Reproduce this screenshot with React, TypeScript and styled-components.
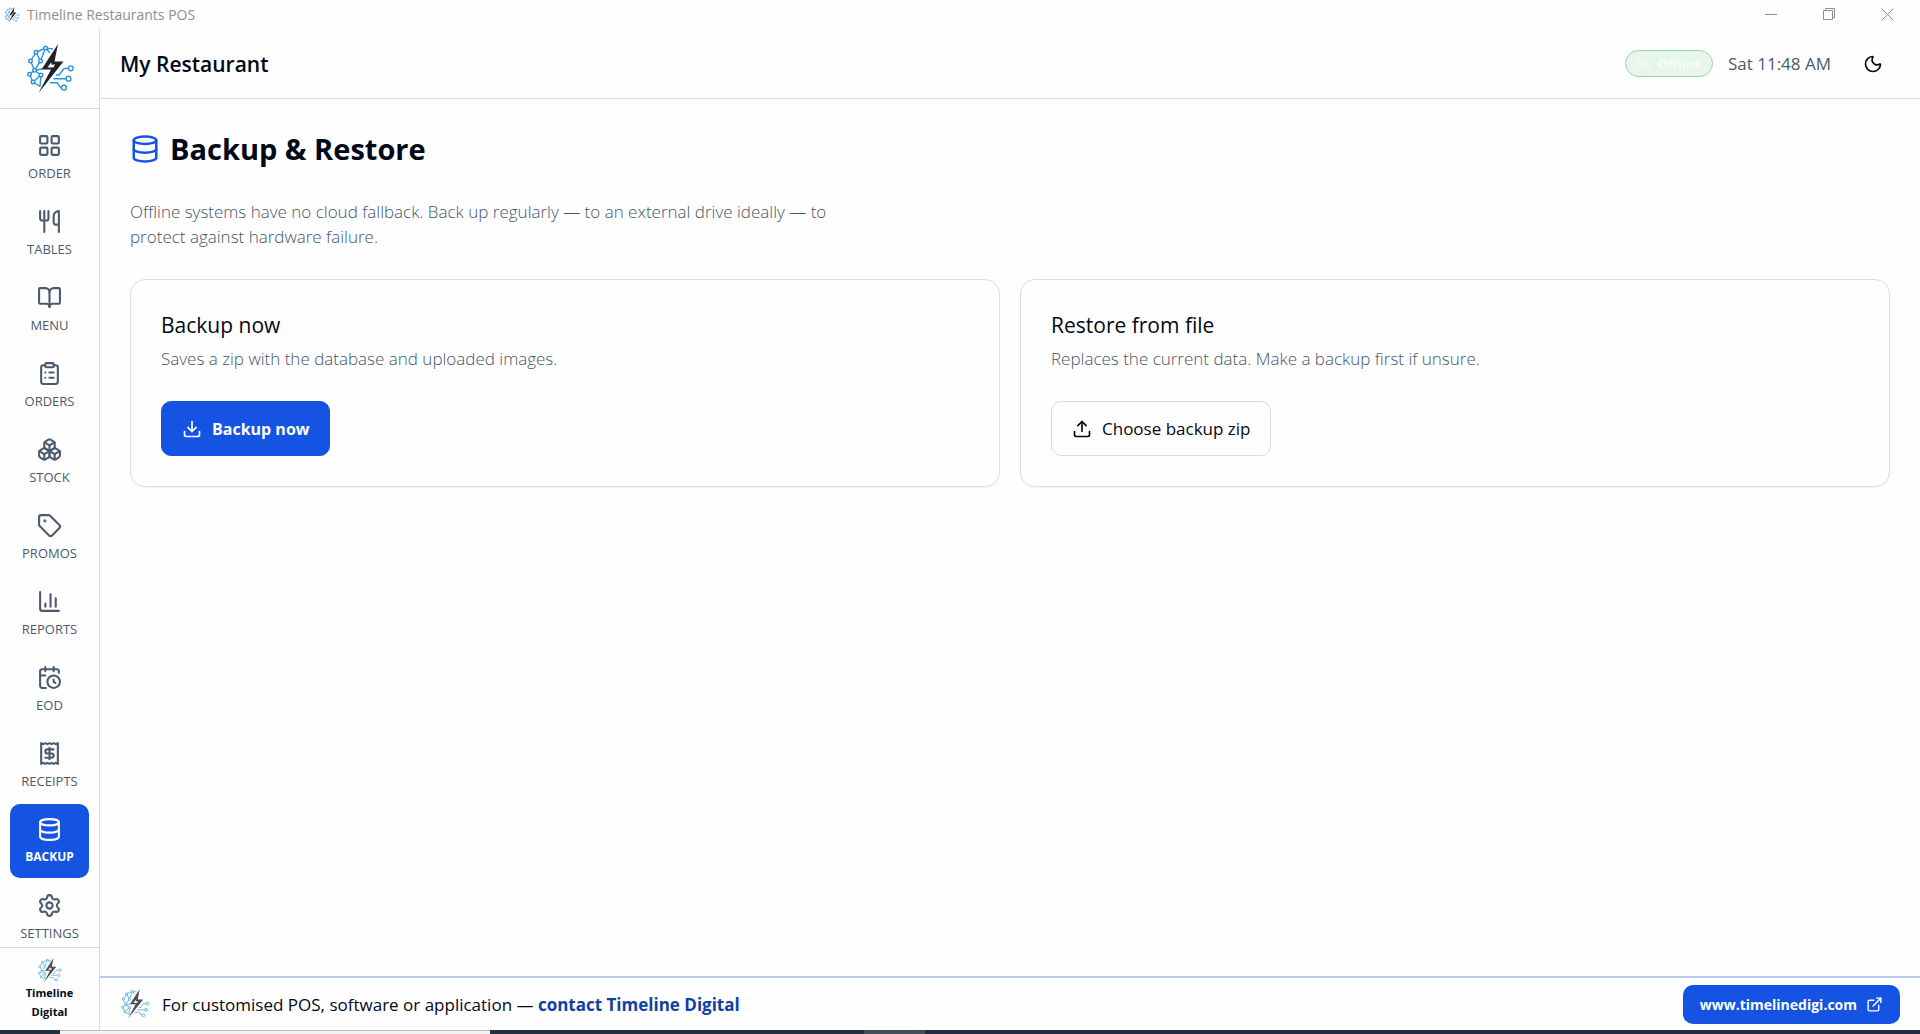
import React from "react";
import styled, { createGlobalStyle, css } from "styled-components";
import {
  LayoutGrid, Utensils, BookOpen, ClipboardList, Boxes, Tag, BarChart3, CalendarClock,
  Receipt, Database, Settings, Download, Upload, WifiOff, Moon, ExternalLink,
} from "lucide-react";

const Global = createGlobalStyle`
  *, *::before, *::after { box-sizing: border-box; }
  body { margin: 0; background: #fefefe; color: #020817; font-family: "Open Sans", "Noto Sans", sans-serif; font-size: 17px; }
  h1, h2, p { margin: 0; }
  a { color: inherit; text-decoration: none; }
  button { font: inherit; color: inherit; border: 0; background: none; padding: 0; cursor: pointer; }
`;

const Window = styled.div`
  display: flex;
  flex-direction: column;
  height: 100vh;
  overflow: hidden;
`;
const TitleBar = styled.div`
  flex: none;
  display: flex;
  align-items: center;
  justify-content: space-between;
  height: 29px;
  padding: 0 4px;
  color: #8f8f8f;
  font-size: 14px;
`;
const TitleName = styled.div`
  display: flex;
  align-items: center;
  gap: 7px;
`;
const WindowControls = styled.div`
  display: flex;
`;
const WindowButton = styled.button`
  display: grid;
  place-items: center;
  width: 58px;
  height: 28px;
`;
const Body = styled.div`
  flex: 1;
  display: flex;
  min-height: 0;
`;
const Sidebar = styled.aside`
  flex: none;
  display: flex;
  flex-direction: column;
  width: 100px;
  border-right: 1px solid #d6dde9;
`;
const Brand = styled.div`
  flex: none;
  display: grid;
  place-items: center;
  height: 80px;
  border-bottom: 1px solid #d6dde9;
`;
const Nav = styled.nav`
  flex: 1;
  display: flex;
  flex-direction: column;
  gap: 2px;
  min-height: 0;
  padding: 11px 10px 0;
  overflow: hidden;
`;
const NavItem = styled.a<{ $active?: boolean }>`
  flex: none;
  display: flex;
  flex-direction: column;
  align-items: center;
  justify-content: center;
  gap: 6px;
  height: 74px;
  border-radius: 10px;
  color: #4c5a6e;
  font-size: 13px;
  line-height: 18px;
  font-weight: 500;
  ${(p) => p.$active && css`
    background: #1553e2;
    color: #fff;
    font-size: 12px;
    font-weight: 700;
  `}
`;
const SidebarFooter = styled.a`
  flex: none;
  display: flex;
  flex-direction: column;
  align-items: center;
  height: 83px;
  padding-top: 10px;
  border-top: 1px solid #d6dde9;
  font-size: 11px;
  line-height: 19px;
  font-weight: 700;
  text-align: center;
`;
const FooterName = styled.span`
  width: 60px;
`;
const Main = styled.div`
  flex: 1;
  display: flex;
  flex-direction: column;
  min-width: 0;
`;
const Header = styled.header`
  flex: none;
  display: flex;
  align-items: center;
  justify-content: space-between;
  height: 70px;
  padding: 0 20px;
  border-bottom: 1px solid #d6dde9;
`;
const Restaurant = styled.div`
  font-size: 21px;
  font-weight: 600;
`;
const Status = styled.div`
  display: flex;
  align-items: center;
  gap: 15px;
`;
const OfflineBadge = styled.span`
  display: flex;
  align-items: center;
  gap: 6px;
  height: 27px;
  padding: 0 10px;
  border: 1px solid #9bd3ae;
  border-radius: 14px;
  background: #e7f6ec;
  color: #f8fafc;
  font-size: 13px;
  font-weight: 700;
`;
const Clock = styled.time`
  color: #4c5a6e;
  font-size: 17px;
`;
const ThemeButton = styled.button`
  display: grid;
  place-items: center;
  width: 54px;
  height: 40px;
`;
const Content = styled.main`
  flex: 1;
  min-height: 0;
  padding: 30px;
`;
const PageTitle = styled.h1`
  display: flex;
  align-items: center;
  gap: 10px;
  font-size: 29px;
  line-height: 40px;
  font-weight: 700;
  svg { color: #1553e2; }
`;
const Intro = styled.p`
  max-width: 720px;
  margin: 30px 0;
  color: #47556a;
  font-size: 17px;
  line-height: 25px;
  font-weight: 300;
`;
const Cards = styled.div`
  display: grid;
  grid-template-columns: 1fr 1fr;
  gap: 20px;
`;
const Card = styled.section`
  padding: 30px;
  border: 1px solid #d6dfeb;
  border-radius: 15px;
  box-shadow: 0 1px 2px rgba(0, 0, 0, 0.05);
`;
const CardTitle = styled.h2`
  font-size: 21px;
  line-height: 30px;
  font-weight: 500;
`;
const CardText = styled.p`
  margin: 6px 0 30px;
  color: #47556a;
  font-size: 17px;
  line-height: 25px;
  font-weight: 300;
`;
const ActionButton = styled.button<{ $primary?: boolean }>`
  display: inline-flex;
  align-items: center;
  gap: 10px;
  height: 55px;
  padding: 0 20px;
  border: 1px solid ${(p) => (p.$primary ? "#1553e2" : "#d3dce9")};
  border-radius: 10px;
  background: ${(p) => (p.$primary ? "#1553e2" : "#fefefe")};
  color: ${(p) => (p.$primary ? "#fff" : "#020817")};
  font-size: ${(p) => (p.$primary ? 16 : 17)}px;
  font-weight: ${(p) => (p.$primary ? 700 : 500)};
`;
const PromoBar = styled.footer`
  flex: none;
  display: flex;
  align-items: center;
  justify-content: space-between;
  height: 54px;
  padding: 0 20px;
  border-top: 2px solid #b9cbf6;
`;
const PromoText = styled.p`
  display: flex;
  align-items: center;
  gap: 12px;
  font-size: 17px;
  font-weight: 500;
  a { color: #0f419f; font-weight: 700; }
`;
const SiteLink = styled.a`
  display: flex;
  align-items: center;
  gap: 9px;
  height: 39px;
  padding: 0 17px;
  border-radius: 10px;
  background: #1553e2;
  color: #fff;
  font-size: 14px;
  font-weight: 700;
`;
const Taskbar = styled.div`
  flex: none;
  display: flex;
  height: 4px;
  background: #1e2c41;
`;
const TaskbarSegment = styled.div<{ $share: number; $tone: string; $edge?: boolean }>`
  flex: ${(p) => p.$share};
  background: ${(p) => p.$tone};
  border-top: ${(p) => (p.$edge ? "1px solid #b9bcbc" : "0")};
`;

const nodes = [
  [20.5, 4], [11, 8.3], [5.5, 17], [15.5, 17], [9.5, 26.3], [4.5, 30.3], [16, 31], [8, 38],
  [45.8, 24.3], [43.5, 34.7], [39, 43.7],
];

const Logo = ({ size, opacity = 1 }: { size: number; opacity?: number }) => (
  <svg width={size} height={size} viewBox="0 0 50 50" fill="none" opacity={opacity} aria-hidden="true">
    <g stroke="#2f93da" strokeWidth="1.4" strokeLinejoin="round">
      <path d="M28 5 20.5 4 11 8.300 5.500 17 9.500 26.300 4.500 30.300 8 38 15 42.500M20.500 4 15.500 17 11 8.300M20.500 4 25 9M15.500 17 9.500 26.300 16 31 8 38M9.500 26.300 17 25M16 31 15 42.500" />
      <path d="M31 31h3l5-6.500h5M28.500 34.700h13M25 38.700h7l3.500 5h2" />
      {nodes.map(([x, y]) => (
        <circle key={`${x}-${y}`} cx={x} cy={y} r={x > 30 ? 2.4 : 1.8} fill="#fefefe" />
      ))}
    </g>
    <path d="M33 0 16.500 25.500H26L13.500 49 38.500 17.500H29.500Z" fill="#222126" />
    <path d="M22.500 23.500l3.500-5 1 2.500 3-1-1.500 3.500z" fill="#fefefe" />
  </svg>
);

const items = [
  { label: "ORDER", Icon: LayoutGrid },
  { label: "TABLES", Icon: Utensils },
  { label: "MENU", Icon: BookOpen },
  { label: "ORDERS", Icon: ClipboardList },
  { label: "STOCK", Icon: Boxes },
  { label: "PROMOS", Icon: Tag },
  { label: "REPORTS", Icon: BarChart3 },
  { label: "EOD", Icon: CalendarClock },
  { label: "RECEIPTS", Icon: Receipt },
  { label: "BACKUP", Icon: Database },
  { label: "SETTINGS", Icon: Settings },
];

export default function App() {
  return (
    <Window>
      <Global />
      <TitleBar>
        <TitleName><Logo size={16} />Timeline Restaurants POS</TitleName>
        <WindowControls>
          <WindowButton aria-label="Minimize"><svg width="13" height="13" stroke="currentColor"><path d="M0 6.5h12" /></svg></WindowButton>
          <WindowButton aria-label="Restore"><svg width="13" height="13" fill="none" stroke="currentColor"><path d="M.5 2.5h9v9h-9zM2.500 2.500v-2h9v9h-2" /></svg></WindowButton>
          <WindowButton aria-label="Close"><svg width="13" height="13" stroke="currentColor"><path d="M.5.5l12 12M12.500.5l-12 12" /></svg></WindowButton>
        </WindowControls>
      </TitleBar>
      <Body>
        <Sidebar>
          <Brand><Logo size={50} /></Brand>
          <Nav>
            {items.map(({ label, Icon }) => (
              <NavItem key={label} href="#" $active={label === "BACKUP"}>
                <Icon size={25} />
                {label}
              </NavItem>
            ))}
          </Nav>
          <SidebarFooter href="#"><Logo size={25} opacity={0.8} /><FooterName>Timeline Digital</FooterName></SidebarFooter>
        </Sidebar>
        <Main>
          <Header>
            <Restaurant>My Restaurant</Restaurant>
            <Status>
              <OfflineBadge><WifiOff size={15} />Offline</OfflineBadge>
              <Clock>Sat 11:48 AM</Clock>
              <ThemeButton aria-label="Dark mode"><Moon size={20} /></ThemeButton>
            </Status>
          </Header>
          <Content>
            <PageTitle><Database size={30} />Backup &amp; Restore</PageTitle>
            <Intro>Offline systems have no cloud fallback. Back up regularly — to an external drive ideally — to protect against hardware failure.</Intro>
            <Cards>
              <Card>
                <CardTitle>Backup now</CardTitle>
                <CardText>Saves a zip with the database and uploaded images.</CardText>
                <ActionButton $primary><Download size={20} />Backup now</ActionButton>
              </Card>
              <Card>
                <CardTitle>Restore from file</CardTitle>
                <CardText>Replaces the current data. Make a backup first if unsure.</CardText>
                <ActionButton><Upload size={20} />Choose backup zip</ActionButton>
              </Card>
            </Cards>
          </Content>
          <PromoBar>
            <PromoText><Logo size={30} opacity={0.8} /><span>For customised POS, software or application — <a href="#">contact Timeline Digital</a></span></PromoText>
            <SiteLink href="#">www.timelinedigi.com<ExternalLink size={17} /></SiteLink>
          </PromoBar>
        </Main>
      </Body>
      <Taskbar>
        <TaskbarSegment $share={60} $tone="#1f3040" />
        <TaskbarSegment $share={430} $tone="#f2f2f2" $edge />
        <TaskbarSegment $share={374} $tone="#1f3040" />
        <TaskbarSegment $share={61} $tone="#3f4d5c" />
        <TaskbarSegment $share={995} $tone="#1e2c41" />
      </Taskbar>
    </Window>
  );
}
